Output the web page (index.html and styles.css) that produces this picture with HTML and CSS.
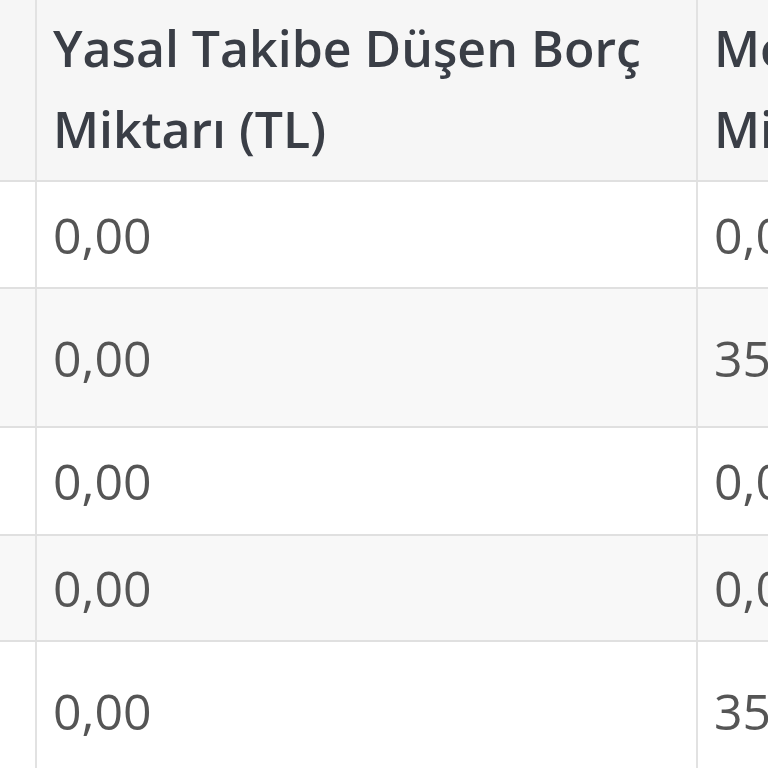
FILE: index.html
```html
<!DOCTYPE html>
<html lang="tr">
<head>
<meta charset="utf-8">
<link rel="stylesheet" href="styles.css">
</head>
<body>
<table class="debt-table">
  <colgroup>
    <col class="c-first">
    <col class="c-second">
    <col class="c-third">
  </colgroup>
  <thead>
    <tr class="head-row">
      <th></th>
      <th>Yasal Takibe Düşen Borç Miktarı (TL)</th>
      <th>Mevcut Borç Miktarı (TL)</th>
    </tr>
  </thead>
  <tbody>
    <tr class="r1"><td></td><td>0,00</td><td>0,00</td></tr>
    <tr class="r2 striped"><td></td><td>0,00</td><td>350,00</td></tr>
    <tr class="r3"><td></td><td>0,00</td><td>0,00</td></tr>
    <tr class="r4 striped"><td></td><td>0,00</td><td>0,00</td></tr>
    <tr class="r5"><td></td><td>0,00</td><td>350,00</td></tr>
  </tbody>
</table>
</body>
</html>
```
FILE: styles.css
```css
html, body {
  margin: 0;
  padding: 0;
  background: #ffffff;
  overflow: hidden;
  width: 768px;
  height: 768px;
}

.debt-table {
  border-collapse: collapse;
  table-layout: fixed;
  width: 1137px;
  font-family: "Open Sans", "Noto Sans", sans-serif;
  font-size: 50px;
  color: #555555;
}

.c-first { width: 36px; }
.c-second { width: 661px; }
.c-third { width: 440px; }

.debt-table th,
.debt-table td {
  padding: 0 16px;
  text-align: left;
  white-space: nowrap;
  overflow: hidden;
  border-left: 2px solid #e2e2e2;
  border-bottom: 2px solid #e0e0e0;
}

.debt-table th:first-child,
.debt-table td:first-child {
  border-left: none;
  padding: 0;
}

.debt-table th {
  background: #f6f6f6;
  color: #3a3e46;
  font-weight: 600;
  line-height: 81px;
  white-space: normal;
  vertical-align: bottom;
  padding-bottom: 10px;
}

.head-row { height: 181px; }

.debt-table td {
  vertical-align: middle;
  line-height: 60px;
}

.r1 { height: 107px; }
.r2 { height: 139px; }
.r3 { height: 108px; }
.r4 { height: 106px; }
.r5 { height: 140px; }

.striped td { background: #f8f8f8; }
```
